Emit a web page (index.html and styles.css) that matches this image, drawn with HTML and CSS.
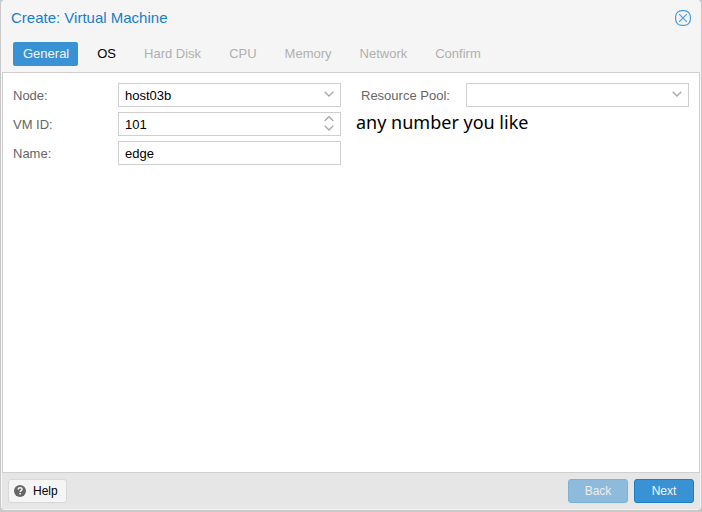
FILE: index.html
```html
<!DOCTYPE html>
<html lang="en">
<head>
<meta charset="utf-8">
<title>Create: Virtual Machine</title>
<link rel="stylesheet" href="styles.css">
</head>
<body>
<main class="window">
  <header class="titlebar">
    <h1 class="title">Create: Virtual Machine</h1>
    <button class="close" type="button" aria-label="Close">
      <svg width="16" height="16" viewBox="0 0 16 16" fill="none" stroke="#4a9bd9"><rect x=".6" y=".6" width="14.8" height="14.8" rx="6.2" stroke-width="1.2"/><path d="M4.2 4.2l7.6 7.6M11.8 4.2l-7.6 7.6" stroke-width="1.1"/></svg>
    </button>
  </header>
  <nav class="tabs">
    <button class="tab active" type="button">General</button>
    <button class="tab" type="button">OS</button>
    <button class="tab" type="button" disabled>Hard Disk</button>
    <button class="tab" type="button" disabled>CPU</button>
    <button class="tab" type="button" disabled>Memory</button>
    <button class="tab" type="button" disabled>Network</button>
    <button class="tab" type="button" disabled>Confirm</button>
  </nav>
  <form class="panel" id="vm-form">
    <div class="column">
      <div class="row">
        <label for="node">Node:</label>
        <div class="field">
          <select id="node"><option>host03b</option></select>
          <svg class="arrows" width="10" height="22" viewBox="0 0 10 22"><path d="M.7 8.7L5 13l4.3-4.3"/></svg>
        </div>
      </div>
      <div class="row">
        <label for="vmid">VM ID:</label>
        <div class="field">
          <input id="vmid" type="text" inputmode="numeric" value="101">
          <svg class="arrows" width="10" height="22" viewBox="0 0 10 22"><path d="M.7 9L5 4.7 9.3 9M.7 13.7L5 18l4.3-4.3"/></svg>
        </div>
      </div>
      <div class="row">
        <label for="name">Name:</label>
        <div class="field"><input id="name" type="text" value="edge"></div>
      </div>
    </div>
    <div class="column">
      <div class="row">
        <label for="pool">Resource Pool:</label>
        <div class="field">
          <select id="pool"><option></option></select>
          <svg class="arrows" width="10" height="22" viewBox="0 0 10 22"><path d="M.7 8.7L5 13l4.3-4.3"/></svg>
        </div>
      </div>
      <p class="note">any number you like</p>
    </div>
  </form>
  <footer class="footer">
    <button class="btn help" type="button">
      <svg width="12" height="12" viewBox="0 0 12 12"><circle cx="6" cy="6" r="6" fill="#666"/><path d="M4.1 4.6C4.2 3.3 5 2.8 6 2.8c1.200 0 2 .6 2 1.600C8 5.600 6.100 5.500 6.100 7.100" fill="none" stroke="#f5f5f5" stroke-width="1.500"/><path d="M5.300 8h1.600v1.500H5.300z" fill="#f5f5f5"/></svg>
      Help
    </button>
    <button class="btn primary" type="button" disabled>Back</button>
    <button class="btn primary" type="submit" form="vm-form">Next</button>
  </footer>
</main>
</body>
</html>
```

FILE: styles.css
```css
* {
  box-sizing: border-box;
}

body {
  margin: 0;
  height: 100vh;
  padding: 0 1px 2px;
  background: #c9c9c9;
  font: 13px/24px "Liberation Sans", Arial, sans-serif;
  color: #000;
}

button,
input,
select {
  font: inherit;
  color: inherit;
}

.window {
  display: flex;
  flex-direction: column;
  height: 100%;
  padding: 0 1px 1px;
  border-radius: 4px;
  background: #f5f5f5;
  overflow: hidden;
}

.titlebar {
  display: flex;
  align-items: center;
  justify-content: space-between;
  height: 36px;
  padding: 0 9px;
}

.title {
  margin: 0;
  font-size: 15px;
  font-weight: 400;
  color: #157fcc;
}

.close {
  display: flex;
  padding: 0;
  border: 0;
  background: none;
}

.tabs {
  display: flex;
  gap: 9px;
  padding: 6px 11px;
}

.tab {
  height: 24px;
  padding: 0 9px 0 10px;
  border: 0;
  border-radius: 2px;
  background: none;
}

.tab:disabled {
  color: #b0b0b0;
}

.tab.active {
  background: #3892d4;
  color: #f5f5f5;
}

.panel {
  flex: 1;
  display: grid;
  grid-template-columns: 1fr 1fr;
  align-items: start;
  gap: 20px;
  padding: 10px;
  border: 1px solid #cfcfcf;
  background: #fff;
}

.column {
  display: grid;
  gap: 5px;
}

.row {
  display: flex;
  height: 24px;
}

.row label {
  flex: 0 0 105px;
  line-height: 26px;
  color: #666;
}

.field {
  position: relative;
  flex: 1;
  display: flex;
}

.field input,
.field select {
  flex: 1;
  min-width: 0;
  padding: 0 6px;
  border: 1px solid #cfcfcf;
  border-radius: 0;
  background: #fff;
  appearance: none;
}

.field input {
  padding-top: 2px;
}

.arrows {
  position: absolute;
  top: 0;
  right: 7px;
  fill: none;
  stroke: #a8a8a8;
  stroke-width: 1.3;
  pointer-events: none;
}

.note {
  margin: 0 0 0 -5px;
  font: 18px/20px "Noto Sans", sans-serif;
}

.footer {
  display: flex;
  gap: 6px;
  padding: 6px;
  background: #e6e6e6;
}

.btn {
  display: flex;
  align-items: center;
  justify-content: center;
  width: 60px;
  height: 24px;
  padding: 0;
  border: 1px solid #d8d8d8;
  border-radius: 3px;
  background: #f5f5f5;
  font-size: 12px;
}

.help {
  gap: 7px;
  width: auto;
  margin-right: auto;
  padding: 0 8px 0 5px;
}

.primary {
  border-color: #157fcc;
  background: #3892d4;
  color: #f5f5f5;
}

.primary:disabled {
  opacity: 0.5;
}
```
